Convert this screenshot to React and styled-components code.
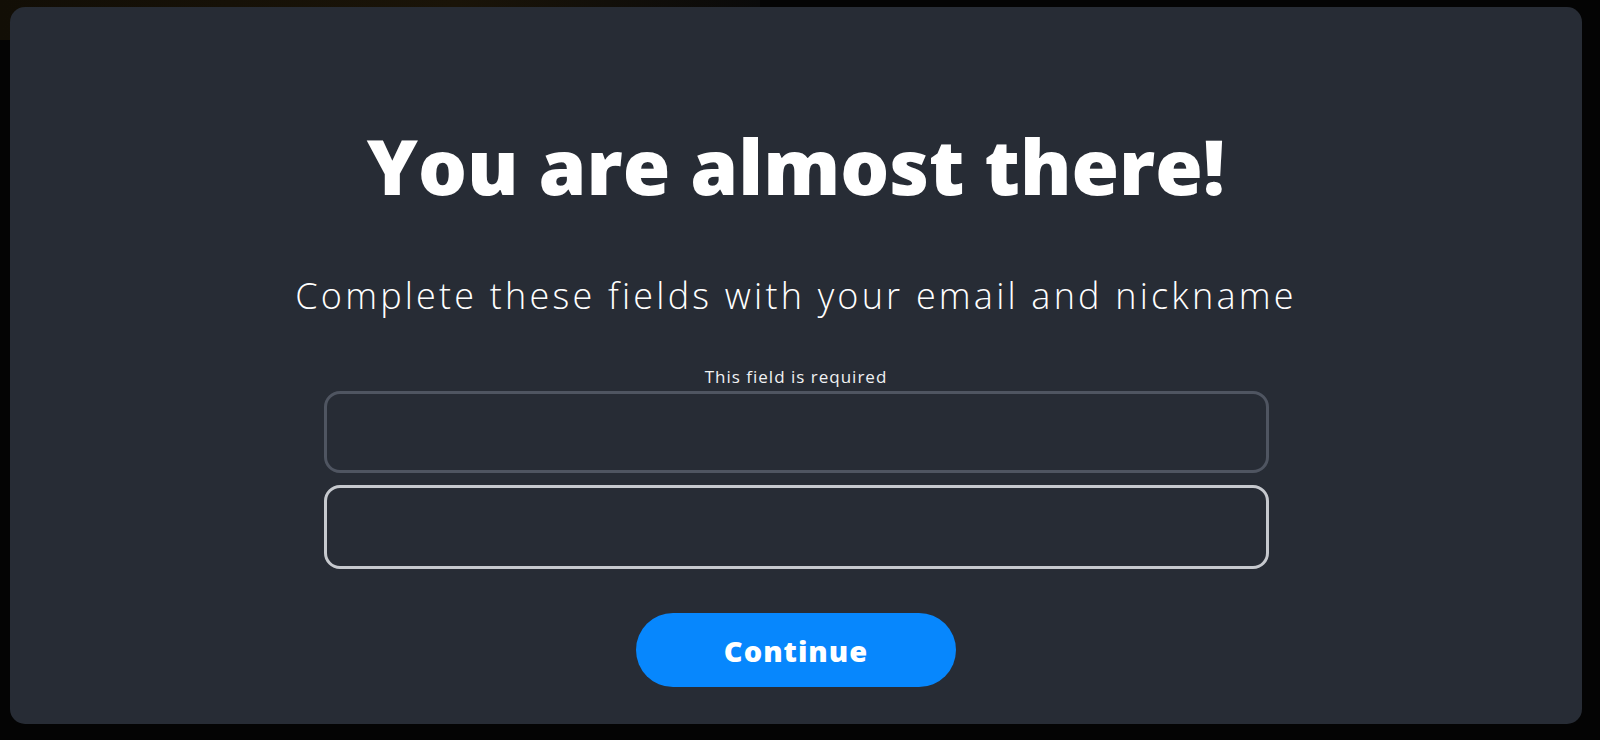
import React from 'react'
import styled, { createGlobalStyle } from 'styled-components'

const GlobalStyle = createGlobalStyle`
  html, body {
    margin: 0;
    padding: 0;
    background: #050505;
    font-family: "Open Sans", "Liberation Sans", sans-serif;
  }
  * { box-sizing: border-box; }
`

const Page = styled.div`
  position: relative;
  width: 1600px;
  height: 740px;
  overflow: hidden;
  background: #040404;
`

// faint strip of the page behind the dark overlay
const Banner = styled.div`
  height: 40px;
  width: 760px;
  background: linear-gradient(90deg, #120e06 0%, #1a1408 60%, #0a0a0a 100%);
`

const Overlay = styled.div`
  position: absolute;
  inset: 0;
  padding: 7px 18px 16px 10px;
  display: flex;
`

const Modal = styled.div`
  flex: 1;
  background: #272c35;
  border-radius: 15px;
  display: flex;
  flex-direction: column;
  align-items: center;
  padding-top: 120px;
`

const Title = styled.h1`
  margin: 0;
  color: #ffffff;
  font-family: "Open Sans", sans-serif;
  font-weight: 800;
  font-size: 77px;
  line-height: 1;
`

const Subtitle = styled.p`
  margin: 74px 0 0;
  color: #ffffff;
  font-family: "Open Sans", sans-serif;
  font-weight: 300;
  font-size: 36px;
  line-height: 35px;
  letter-spacing: 3.2px;
`

const Form = styled.form`
  margin-top: 54px;
  width: 945px;
  display: flex;
  flex-direction: column;
  align-items: center;
`

const Hint = styled.span`
  color: #f0f2f4;
  font-size: 17px;
  line-height: 20px;
  letter-spacing: 1px;
  margin-bottom: 4px;
`

const Field = styled.input`
  width: 100%;
  height: ${p => p.$tall ? 84 : 82}px;
  background: transparent;
  border: 3px solid ${p => p.$active ? '#c6c9ce' : '#4f5561'};
  border-radius: 16px;
  outline: none;
  color: #fff;
  font-size: 22px;
  padding: 0 24px;
  font-family: inherit;
  & + & { margin-top: 12px; }
`

const Button = styled.button`
  margin-top: 44px;
  width: 320px;
  height: 74px;
  border: none;
  border-radius: 37px;
  background: #0787fd;
  color: #ffffff;
  font-family: "Open Sans", sans-serif;
  font-weight: 800;
  font-size: 29px;
  letter-spacing: 1px;
  cursor: pointer;
`

export default function App() {
  return (
    <Page>
      <GlobalStyle />
      <Banner />
      <Overlay>
        <Modal>
          <Title>You are almost there!</Title>
          <Subtitle>Complete these fields with your email and nickname</Subtitle>
          <Form onSubmit={e => e.preventDefault()}>
            <Hint>This field is required</Hint>
            <Field type="email" />
            <Field type="text" $active $tall />
            <Button type="submit">Continue</Button>
          </Form>
        </Modal>
      </Overlay>
    </Page>
  )
}
